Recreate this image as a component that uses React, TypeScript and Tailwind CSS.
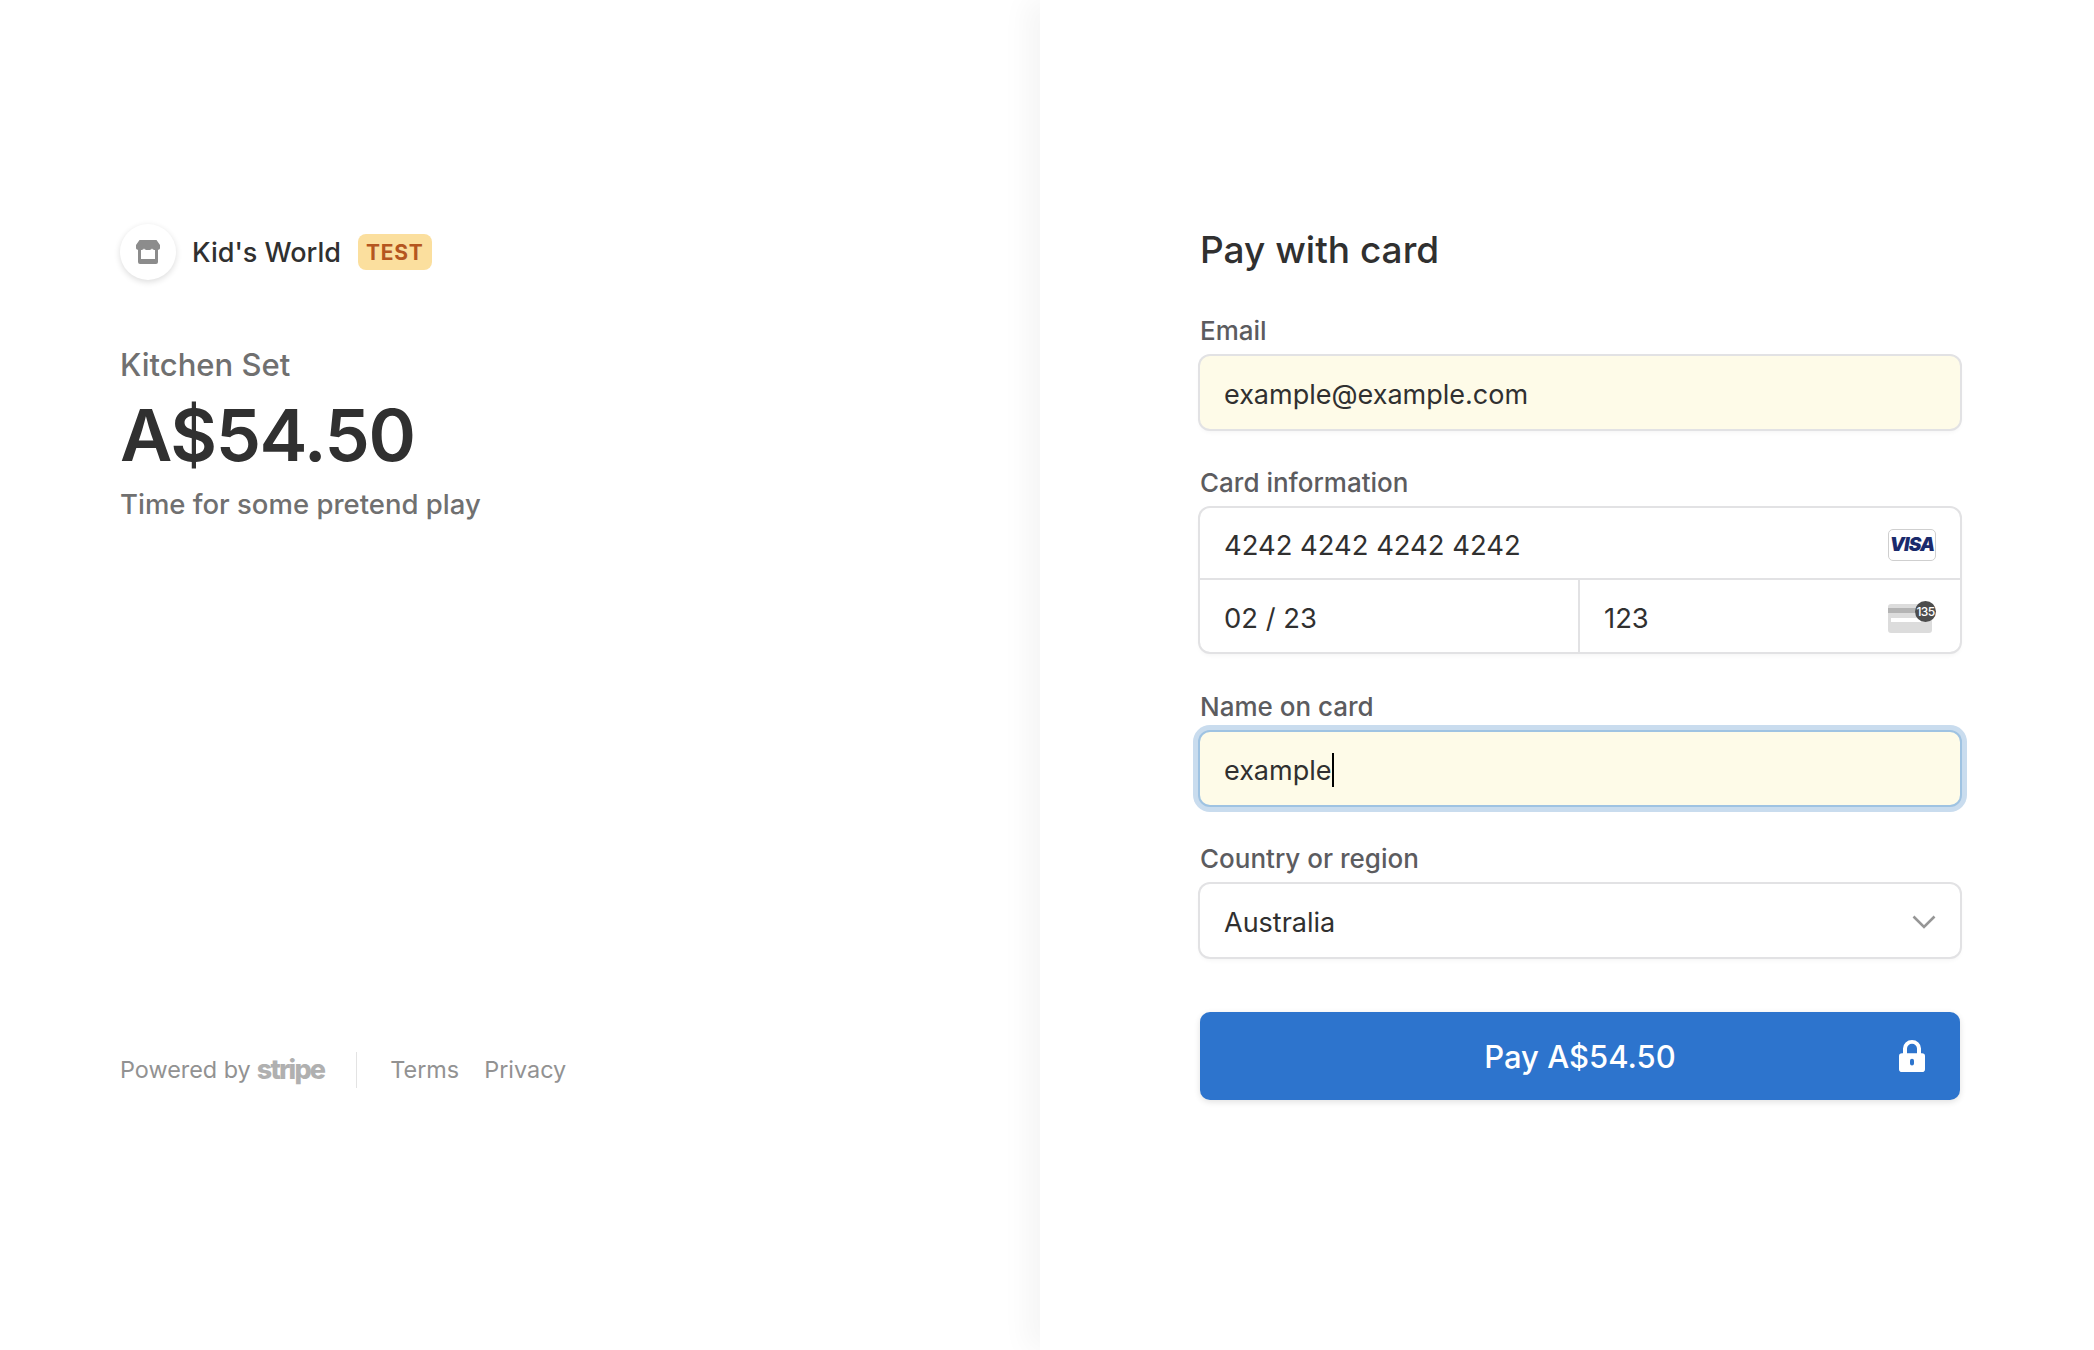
import React from "react";

const font = "font-['Inter','Liberation_Sans',sans-serif]";

function Field({ label, children, className = "" }: { label: string; children: React.ReactNode; className?: string }) {
  return (
    <div className={className}>
      <div className="text-[26px] leading-[32px] font-medium text-[#5c5c5f] pl-px">{label}</div>
      {children}
    </div>
  );
}

const cardBox = "rounded-[10px] shadow-[0_0_0_2px_#e2e2e4,0_3px_5px_rgba(0,0,0,0.05)]";

function Store() {
  return (
    <svg width="24" height="24" viewBox="0 0 24 24" fill="#8c8c8c">
      <path d="M3.5 0h17L24 5v3A4 2 0 0 1 16 8 4 2 0 0 1 8 8 4 2 0 0 1 0 8V5z" />
      <path d="M2 10h3v9h14v-9h3v12a2 2 0 0 1-2 2H4a2 2 0 0 1-2-2z" />
    </svg>
  );
}

function CvcIcon() {
  return (
    <div className="relative w-[48px] h-[32px]">
      <svg width="44" height="29" viewBox="0 0 44 29" className="absolute left-0 top-[3px]">
        <rect width="44" height="29" rx="3" fill="#dcdcdc" />
        <rect y="4" width="44" height="5" fill="#b4b4b4" />
        <rect x="3" y="14" width="30" height="4" fill="#ffffff" />
      </svg>
      <div className="absolute left-[27px] top-0 w-[21px] h-[21px] rounded-full bg-[#4d4d4d] text-white text-[12px] leading-[21px] font-medium text-center tracking-[-0.7px]">
        135
      </div>
    </div>
  );
}

export default function App() {
  return (
    <div className={`${font} flex w-full h-[1350px] bg-white overflow-hidden`}>
      <div className="w-[1040px] shrink-0 pl-[120px] pt-[224px] flex flex-col">
        <div className="flex items-center h-[56px]">
          <div className="w-[56px] h-[56px] rounded-full bg-white shadow-[0_2px_6px_rgba(0,0,0,0.14)] flex items-center justify-center">
            <Store />
          </div>
          <div className="ml-[16px] pt-[1px] text-[27px] leading-[36px] font-medium text-[#303030]">Kid's World</div>
          <div className="ml-[17px] h-[36px] px-[8px] rounded-[8px] bg-[#fbdf9e] text-[#b5561f] text-[21px] leading-[37px] font-bold tracking-[0.8px]">
            TEST
          </div>
        </div>
        <div className="mt-[65px] text-[31px] leading-[40px] font-medium text-[#707070]">Kitchen Set</div>
        <div className="mt-[8px] text-[72px] leading-[84px] font-semibold tracking-[-1.4px] text-[#303030]">A$54.50</div>
        <div className="mt-[9px] text-[27.5px] leading-[36px] font-medium text-[#707070]">Time for some pretend play</div>
        <div className="mt-[530px] flex items-center h-[36px] text-[23.4px] text-[#929292]">
          <span>Powered by</span>
          <span className="ml-[6px] text-[#b0b0b0] text-[27px] font-extrabold tracking-[-1.8px]">stripe</span>
          <div className="ml-[32px] w-px h-[36px] bg-[#e3e3e3]" />
          <span className="ml-[33px]">Terms</span>
          <span className="ml-[25px]">Privacy</span>
        </div>
      </div>

      <div className="flex-1 pl-[160px] pt-[224px] bg-white shadow-[-14px_0_26px_rgba(0,0,0,0.04)]">
        <div className="w-[760px] -ml-px pl-px">
          <h1 className="text-[37px] leading-[52px] font-medium text-[#303030]">Pay with card</h1>

          <Field label="Email" className="mt-[39px] -ml-px">
            <div className={`mt-[9px] ml-px w-[760px] h-[73px] px-[24px] pt-[5px] flex items-center bg-[#fefbe8] text-[27px] text-[#303030] ${cardBox}`}>
              example@example.com
            </div>
          </Field>

          <Field label="Card information" className="mt-[38px] -ml-px">
            <div className={`mt-[9px] ml-px w-[760px] ${cardBox}`}>
              <div className="h-[72px] px-[24px] pt-[6px] flex items-center justify-between text-[27.4px] text-[#303030] border-b-2 border-[#e2e2e4]">
                <span>4242 4242 4242 4242</span>
                <span className="-mt-[2px] w-[48px] h-[32px] rounded-[5px] border border-[#cfcfcf] bg-white text-[#1a2a6c] text-[19px] leading-[30px] font-black italic text-center tracking-[-0.8px]">
                  VISA
                </span>
              </div>
              <div className="flex h-[72px] text-[27.4px] text-[#303030]">
                <div className="w-[380px] px-[24px] pt-[5px] flex items-center border-r-2 border-[#e2e2e4]">02 / 23</div>
                <div className="flex-1 px-[24px] pt-[5px] flex items-center justify-between">
                  <span>123</span>
                  <span className="-mt-[4px]"><CvcIcon /></span>
                </div>
              </div>
            </div>
          </Field>

          <Field label="Name on card" className="mt-[39px] -ml-px">
            <div className="mt-[9px] ml-px w-[760px] h-[73px] px-[24px] pt-[5px] flex items-center bg-[#fefbe8] text-[27px] text-[#303030] rounded-[10px] shadow-[0_0_0_2px_#9fc3e2,0_0_0_7px_#c9dcee]">
              example
              <span className="w-[2px] h-[34px] bg-black -mt-[2px]" />
            </div>
          </Field>

          <Field label="Country or region" className="mt-[38px] -ml-px">
            <div className={`mt-[9px] ml-px w-[760px] h-[73px] px-[24px] pt-[5px] flex items-center justify-between bg-white text-[27px] text-[#303030] ${cardBox}`}>
              <span>Australia</span>
              <svg width="24" height="14" viewBox="0 0 24 14" fill="none" stroke="#969696" strokeWidth="2.6" className="-mt-[3px]">
                <path d="M1.5 1.5 12 12 22.5 1.5" />
              </svg>
            </div>
          </Field>

          <button className="mt-[55px] relative w-[760px] h-[88px] rounded-[10px] bg-[#2d74cd] text-white text-[31px] font-medium pt-[2px] shadow-[0_2px_6px_rgba(0,0,0,0.12)] flex items-center justify-center">
            Pay A$54.50
            <svg width="26" height="32" viewBox="0 0 26 34" preserveAspectRatio="none" className="absolute right-[35px] top-[28px]" fill="#fff">
              <path fillRule="evenodd" d="M4 14V9a9 9 0 0 1 18 0v5h1a3 3 0 0 1 3 3v14a3 3 0 0 1-3 3H3a3 3 0 0 1-3-3V17a3 3 0 0 1 3-3h1zm4 0h10V9a5 5 0 0 0-10 0v5zm5 6a2 2 0 0 0-2 2v3a2 2 0 0 0 4 0v-3a2 2 0 0 0-2-2z" />
            </svg>
          </button>
        </div>
      </div>
    </div>
  );
}
